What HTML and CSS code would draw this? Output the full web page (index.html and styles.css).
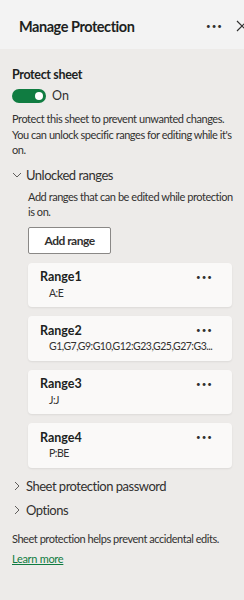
FILE: index.html
```html
<!DOCTYPE html>
<html lang="en">
  <head>
    <meta charset="utf-8">
    <title>Manage Protection</title>
    <link rel="stylesheet" href="styles.css">
  </head>
  <body>
    <div class="pane">
      <div class="pane-header">
        <span class="pane-title">Manage Protection</span>
        <span class="header-more">&bull;&bull;&bull;</span>
        <svg class="header-close" width="12" height="12" viewBox="0 0 12 12"><path d="M1 1 L11 11 M11 1 L1 11" stroke="#323130" stroke-width="1.2" fill="none"/></svg>
      </div>

      <div class="pane-body">
        <div class="label">Protect sheet</div>
        <div class="toggle-row">
          <span class="toggle"><span class="knob"></span></span>
          <span class="toggle-text">On</span>
        </div>
        <p class="desc">Protect this sheet to prevent unwanted changes. You can unlock specific ranges for editing while it's on.</p>

        <!-- Unlocked ranges section -->
        <div class="section-head">
          <svg class="chevron" width="10" height="10" viewBox="0 0 10 10"><path d="M1 3 L5 7 L9 3" stroke="#605e5c" stroke-width="1" fill="none"/></svg>
          <span>Unlocked ranges</span>
        </div>
        <div class="section-body">
          <p class="desc wide">Add ranges that can be edited while protection is on.</p>
          <button class="add-button" type="button">Add range</button>

          <div class="range-card">
            <div class="range-top"><span class="range-name">Range1</span><span class="range-more">&bull;&bull;&bull;</span></div>
            <div class="range-ref">A:E</div>
          </div>
          <div class="range-card">
            <div class="range-top"><span class="range-name">Range2</span><span class="range-more">&bull;&bull;&bull;</span></div>
            <div class="range-ref">G1,G7,G9:G10,G12:G23,G25,G27:G3...</div>
          </div>
          <div class="range-card">
            <div class="range-top"><span class="range-name">Range3</span><span class="range-more">&bull;&bull;&bull;</span></div>
            <div class="range-ref">J:J</div>
          </div>
          <div class="range-card">
            <div class="range-top"><span class="range-name">Range4</span><span class="range-more">&bull;&bull;&bull;</span></div>
            <div class="range-ref">P:BE</div>
          </div>
        </div>

        <div class="section-head closed">
          <svg class="chevron" width="10" height="10" viewBox="0 0 10 10"><path d="M3 1 L7 5 L3 9" stroke="#605e5c" stroke-width="1" fill="none"/></svg>
          <span>Sheet protection password</span>
        </div>
        <div class="section-head closed">
          <svg class="chevron" width="10" height="10" viewBox="0 0 10 10"><path d="M3 1 L7 5 L3 9" stroke="#605e5c" stroke-width="1" fill="none"/></svg>
          <span>Options</span>
        </div>

        <p class="footer-text">Sheet protection helps prevent accidental edits.</p>
        <a class="learn-more" href="#">Learn more</a>
      </div>
    </div>
  </body>
</html>
```

FILE: styles.css
```css
/* Task pane */
body {
    margin: 0;
    background-color: #edebe9;
    font-family: 'Lato', sans-serif;
    color: #323130;
}

.pane {
    width: 244px;
    min-height: 600px;
    background-color: #edebe9;
}

.pane-header {
    display: flex;
    align-items: center;
    height: 49px;
    padding: 3px 0 0 19px;
    box-sizing: border-box;
    background-color: #f3f3f3;
}

.pane-title {
    flex: 1;
    font-size: 14.5px;
    font-weight: 700;
    letter-spacing: -0.45px;
    color: #201f1e;
}

.header-more {
    font-size: 8px;
    letter-spacing: 1px;
    color: #323130;
    margin-right: 13px;
}

.header-close {
    margin-right: -4px;
}

.pane-body {
    padding: 18px 12px 0 12px;
}

.label {
    font-size: 12.5px;
    font-weight: 700;
    line-height: 16px;
    letter-spacing: -0.35px;
    color: #201f1e;
}

.toggle-row {
    display: flex;
    align-items: center;
    margin-top: 5px;
}

.toggle {
    position: relative;
    width: 34px;
    height: 14px;
    border-radius: 7px;
    background-color: #107c41;
}

.toggle .knob {
    position: absolute;
    top: 3px;
    right: 3px;
    width: 8px;
    height: 8px;
    border-radius: 50%;
    background-color: #ffffff;
}

.toggle-text {
    margin-left: 6px;
    font-size: 12.5px;
}

.desc {
    margin: 8px 0 0 0;
    font-size: 11px;
    line-height: 15.5px;
    letter-spacing: -0.45px;
    color: #323130;
}

.section-head {
    display: flex;
    align-items: center;
    margin-top: 8px;
    font-size: 13px;
    line-height: 18px;
    letter-spacing: -0.5px;
    color: #323130;
}

.section-head .chevron {
    margin-right: 4px;
}

.section-head.closed {
    margin-top: 6px;
}

.section-body {
    padding-left: 16px;
    margin-bottom: 9px;
}

.section-body .desc {
    margin-top: 5px;
}

/* the hint text runs a bit past the cards on the right */
.section-body .desc.wide {
    margin-right: -2px;
}

.add-button {
    display: block;
    margin-top: 7px;
    width: 83px;
    height: 27px;
    background-color: #ffffff;
    border: 1px solid #8a8886;
    border-radius: 2px;
    font-family: 'Lato', sans-serif;
    font-size: 12px;
    font-weight: 700;
    letter-spacing: -0.5px;
    color: #323130;
}

.range-card {
    margin-top: 9px;
    height: 44.5px;
    box-sizing: border-box;
    padding: 5px 19px 0 12px;
    background-color: #faf9f8;
    border-radius: 4px;
    box-shadow: 0 1px 2px rgba(0, 0, 0, 0.08);
}

.range-top {
    display: flex;
    align-items: center;
    justify-content: space-between;
    height: 18px;
}

.range-name {
    font-size: 12.5px;
    font-weight: 700;
    color: #201f1e;
}

.range-more {
    font-size: 8px;
    letter-spacing: 1px;
    color: #323130;
}

.range-ref {
    padding-left: 9px;
    font-size: 10.5px;
    line-height: 14px;
    letter-spacing: -0.5px;
    white-space: nowrap;
    color: #323130;
}

.footer-text {
    margin: 13px 0 0 0;
    font-size: 11px;
    line-height: 14px;
    letter-spacing: -0.45px;
}

.learn-more {
    display: block;
    width: max-content;
    margin-top: 6px;
    font-size: 11px;
    line-height: 14px;
    letter-spacing: -0.3px;
    color: #107c41;
    text-decoration: underline;
}
```
